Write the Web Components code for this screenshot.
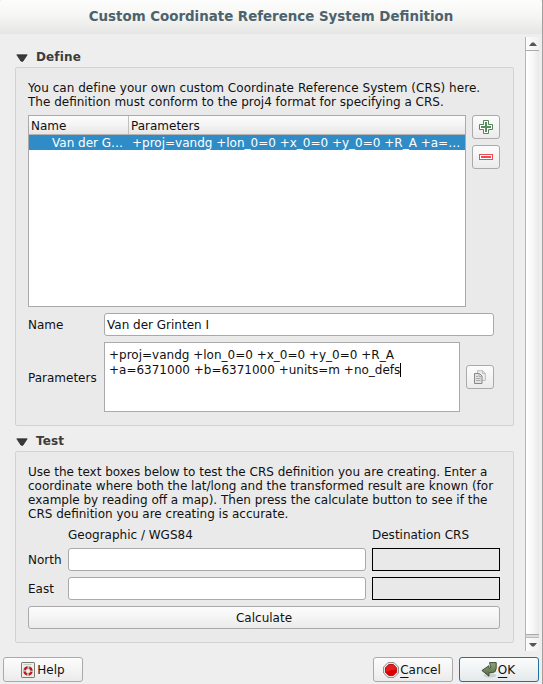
<!DOCTYPE html>
<html lang="en">
<head>
<meta charset="utf-8">
<title>Custom Coordinate Reference System Definition</title>
<style>
html,body{margin:0;height:684px;overflow:hidden;background:#eee}
body{font:12px/14px "DejaVu Sans","Liberation Sans",sans-serif;color:#111}
</style>
</head>
<body>
<crs-dialog></crs-dialog>
<script>
const define = (name, html) => customElements.define(name, class extends HTMLElement {
  constructor() {
    super();
    const t = document.createElement('template');
    t.innerHTML = '<style>*{box-sizing:border-box}:host{box-sizing:border-box}</style>' + html;
    this.attachShadow({mode: 'open'}).append(t.content.cloneNode(true));
  }
});

define('title-bar', `<style>
:host{display:block;height:34px;background:linear-gradient(#fdfdfd,#f6f6f5 45%,#e6e6e4);border-radius:3px 3px 0 0;text-align:center;font-size:13.38px;font-weight:bold;line-height:33px;color:#4c626c;white-space:nowrap}
</style><slot></slot>`);

define('text-line', `<style>
:host{display:block;white-space:pre;height:14px;line-height:14px}
</style><slot></slot>`);

define('group-box', `<style>
:host{display:flex;flex-direction:column}
header{display:flex;align-items:center;height:20px;padding-left:1px;gap:8px;font-weight:bold;letter-spacing:.13px;color:#3c3c3c;line-height:20px}
svg{display:block;width:12px;height:8px;margin-top:1px}
section{flex:1;margin:0;border:1px solid #d2d2d2;border-radius:2px;background:#eaeaea;padding:13px 13px 12px 12px}
</style><header><svg viewBox="0 0 12 8"><path d="M.8.8h10.4L7 7.2H5z" fill="#3a3a3a" stroke="#222" stroke-width=".7"/></svg><slot name="title"></slot></header><section><slot></slot></section>`);

define('push-button', `<style>
:host{display:flex;align-items:center;justify-content:center;border:1px solid #aaa;border-radius:3px;background:linear-gradient(#fcfcfc,#f6f6f6 40%,#ebebeb);height:24px;gap:2px;white-space:nowrap}
:host([default]){border-color:#24709f;background:linear-gradient(#fbfcfc,#f0f3f4 50%,#e3e9eb)}
</style><slot name="icon"></slot><slot></slot>`);

define('line-edit', `<style>
:host{display:block;height:23px;border:1px solid #a9a9a9;border-radius:3px;background:#fff;padding:1px 2px 0;line-height:21px;white-space:pre}
:host([readonly]){border-color:#000;border-radius:0;background:#e9e9e9}
</style><slot></slot>`);

define('text-area', `<style>
:host{display:block;border:1px solid #aaa;background:#fff;padding:5px 4px}
</style><slot></slot>`);

define('crs-table', `<style>
:host{display:block;border:1px solid #aaa;background:#fff;height:192px}
.h,.r{display:grid;grid-template-columns:100px 1fr;white-space:pre}
.h{height:19px;line-height:20px;background:linear-gradient(#fcfcfc,#f4f4f4 50%,#e6e6e6);border-bottom:1px solid #b4b4b4}
.h>*{padding-left:2px;height:18px}.h>:first-child{border-right:1px solid #c0c0c0}
.r{height:15px;line-height:16px;background:#308cc6;color:#fff}
.r>:first-child{padding-left:23px}.r>:last-child{padding-left:3px}
</style><div class="h"><div>Name</div><div>Parameters</div></div>
<div class="r"><div>Van der G…</div><div>+proj=vandg +lon_0=0 +x_0=0 +y_0=0 +R_A +a=…</div></div>`);

define('scroll-bar', `<style>
:host{display:flex;flex-direction:column;width:14px;height:614px;border-left:1px solid #b4b4b4;background:linear-gradient(90deg,#fff,#f8f8f8 50%,#e9e9e9)}
div{height:13px;display:grid;place-items:center;background:linear-gradient(90deg,#fcfcfc,#f1f1f1)}
i{flex:1;border-top:1px solid #aaa;border-bottom:1px solid #aaa}
b{height:3px;background:#dcdcdc;border-bottom:1px solid #bbb}
svg{display:block}
</style><div><svg width="8" height="4"><path d="M0 4L3 .5h2L8 4z" fill="#555"/></svg></div><i></i><b></b><div><svg width="8" height="4"><path d="M0 0L3 3.5h2L8 0z" fill="#555"/></svg></div>`);

define('icon-add', `<style>:host,svg{display:block}</style><svg width="14" height="14"><path d="M4.500.5h5v4h4v5h-4v4h-5v-4h-4v-5h4z" fill="#fff" stroke="#4f8757"/><path d="M6 2h2v4h4v2H8v4H6V8H2V6h4z" fill="#578c5e" shape-rendering="crispEdges"/></svg>`);
define('icon-remove', `<style>:host,svg{display:block}</style><svg width="14" height="6" shape-rendering="crispEdges"><path d="M.5.5h13v5H.5z" fill="#fff" stroke="#ea4e52"/><path d="M2 2h10v2H2z" fill="#ef4b50"/></svg>`);
define('icon-copy', `<style>:host,svg{display:block}</style><svg width="14" height="15"><path d="M4.500.7h5l2.800 2.800v7H4.500z" fill="#eee" stroke="#bbb" stroke-linejoin="round"/><path d="M9.500.7v2.800h2.800" fill="none" stroke="#bbb"/><path d="M1.500 3.500h5L9 6v7.500H1.500z" fill="#e2e2e2" stroke="#888" stroke-linejoin="round"/><path d="M6 3.500V6.500h3M3 6.500h2M3 8.500h4.500M3 10.500h4.500" fill="none" stroke="#aaa"/></svg>`);
define('icon-help', `<style>:host,svg{display:block}</style><svg width="14" height="16"><rect x=".5" y=".5" width="13" height="15" rx=".6" fill="#eeeeec" stroke="#777b76"/><path d="M2.500 2.500h8" stroke="#c0cfc0"/><circle cx="7" cy="9" r="3.600" fill="none" stroke="#bcbcba" stroke-width="2.600"/><circle cx="7" cy="9" r="3.600" fill="none" stroke="#d00d0d" stroke-width="2.300" stroke-dasharray="3.700 1.955" stroke-dashoffset="-.98"/><circle cx="7" cy="9" r="2.200" fill="#f4f4f2" stroke="#999" stroke-width=".5"/></svg>`);
define('icon-stop', `<style>:host,svg{display:block}</style><svg width="16" height="16"><path d="M5 .6h6L15.400 5v6L11 15.400H5L.6 11V5z" fill="#eee" stroke="#888"/><path d="M5.700 2.500h4.600l3.200 3.200v4.600l-3.200 3.200H5.700l-3.200-3.200V5.700z" fill="#d00" stroke="#b00000" stroke-width=".8"/><path d="M5.800 3h4.400L13 5.800v1.700Q8 7.500 3 10V5.800z" fill="#e83434" opacity=".6"/></svg>`);
define('icon-enter', `<style>:host,svg{display:block}</style><svg width="16" height="16"><defs><linearGradient id="g" x2="0" y2="1"><stop stop-color="#8ea37a"/><stop offset="1" stop-color="#566c45"/></linearGradient></defs><ellipse cx="9" cy="13.500" rx="6.500" ry="2" fill="#000" opacity=".12"/><path d="M8.500.6h6.700v5.800q0 4-4 4.300H8v3.500L.9 8.500 8 3.700v2.600h.8q.9 0 .9-1.600z" fill="url(#g)" stroke="#42503a" stroke-linejoin="round"/></svg>`);

define('define-form', `<style>
:host{display:flex;flex-direction:column;gap:6px}
.t{display:grid;grid-template-columns:438px 28px;gap:6px}
.w{letter-spacing:.04px}
.b{display:flex;flex-direction:column;gap:6px}
.n{display:grid;grid-template-columns:76px 390px;align-items:center}
.p{display:grid;grid-template-columns:76px 356px 28px;align-items:center}
.p text-line{height:15px;line-height:16px}
text-area{height:70px}.p push-button{margin-left:6px;width:28px}
.e{line-height:15px;white-space:pre}.c{display:inline-block;width:1px;height:14px;background:#000;vertical-align:top}
</style>
<div><text-line class="w">You can define your own custom Coordinate Reference System (CRS) here.</text-line><text-line>The definition must conform to the proj4 format for specifying a CRS.</text-line></div>
<div class="t"><crs-table></crs-table><div class="b"><push-button><icon-add slot="icon"></icon-add></push-button><push-button><icon-remove slot="icon"></icon-remove></push-button></div></div>
<div class="n"><text-line>Name</text-line><line-edit>Van der Grinten I</line-edit></div>
<div class="p"><text-line>Parameters</text-line><text-area><div class="e">+proj=vandg +lon_0=0 +x_0=0 +y_0=0 +R_A</div><div class="e">+a=6371000 +b=6371000 +units=m +no_defs<span class="c"></span></div></text-area><push-button><icon-copy slot="icon"></icon-copy></push-button></div>`);

define('test-form', `<style>
:host{display:flex;flex-direction:column;gap:6px}
.g{display:grid;grid-template-columns:40px 298px 128px;column-gap:0;row-gap:6px;align-items:center;padding-top:1px}
.g>:nth-child(3n){margin-left:6px;width:128px}
push-button{height:23px}
</style>
<div><text-line>Use the text boxes below to test the CRS definition you are creating. Enter a</text-line><text-line>coordinate where both the lat/long and the transformed result are known (for</text-line><text-line>example by reading off a map). Then press the calculate button to see if the</text-line><text-line>CRS definition you are creating is accurate.</text-line></div>
<div class="g"><span></span><text-line>Geographic / WGS84</text-line><text-line>Destination CRS</text-line>
<text-line>North</text-line><line-edit></line-edit><line-edit readonly></line-edit>
<text-line>East</text-line><line-edit></line-edit><line-edit readonly></line-edit></div>
<push-button>Calculate</push-button>`);

define('crs-dialog', `<style>
:host{display:flex;flex-direction:column;width:543px;height:684px;background:#eee;border-right:1px solid #a0a0a0}
main{display:flex;height:617px;padding-top:3px;padding-left:15px;gap:11px}
.c{width:499px;display:flex;flex-direction:column;padding-top:10px}
.one{height:379px}.two{height:212px;margin-top:5px}
footer{display:flex;padding:6px 3px 0;gap:6px}
push-button{width:80px;height:25px}.help{margin-right:auto}
push-button>span{height:15px;line-height:16px}
push-button:not(.help){padding-right:2px}
u{text-decoration:underline;text-decoration-thickness:1px;text-underline-offset:3px;text-decoration-skip-ink:none}
push-button:not(.help){gap:1px}
</style>
<title-bar>Custom Coordinate Reference System Definition</title-bar>
<main><div class="c"><group-box class="one"><span slot="title">Define</span><define-form></define-form></group-box><group-box class="two"><span slot="title">Test</span><test-form></test-form></group-box></div><scroll-bar></scroll-bar></main>
<footer><push-button class="help"><icon-help slot="icon"></icon-help><span>Help</span></push-button><push-button><icon-stop slot="icon"></icon-stop><span><u>C</u>ancel</span></push-button><push-button default><icon-enter slot="icon"></icon-enter><span><u>O</u>K</span></push-button></footer>`);
</script>
</body>
</html>
